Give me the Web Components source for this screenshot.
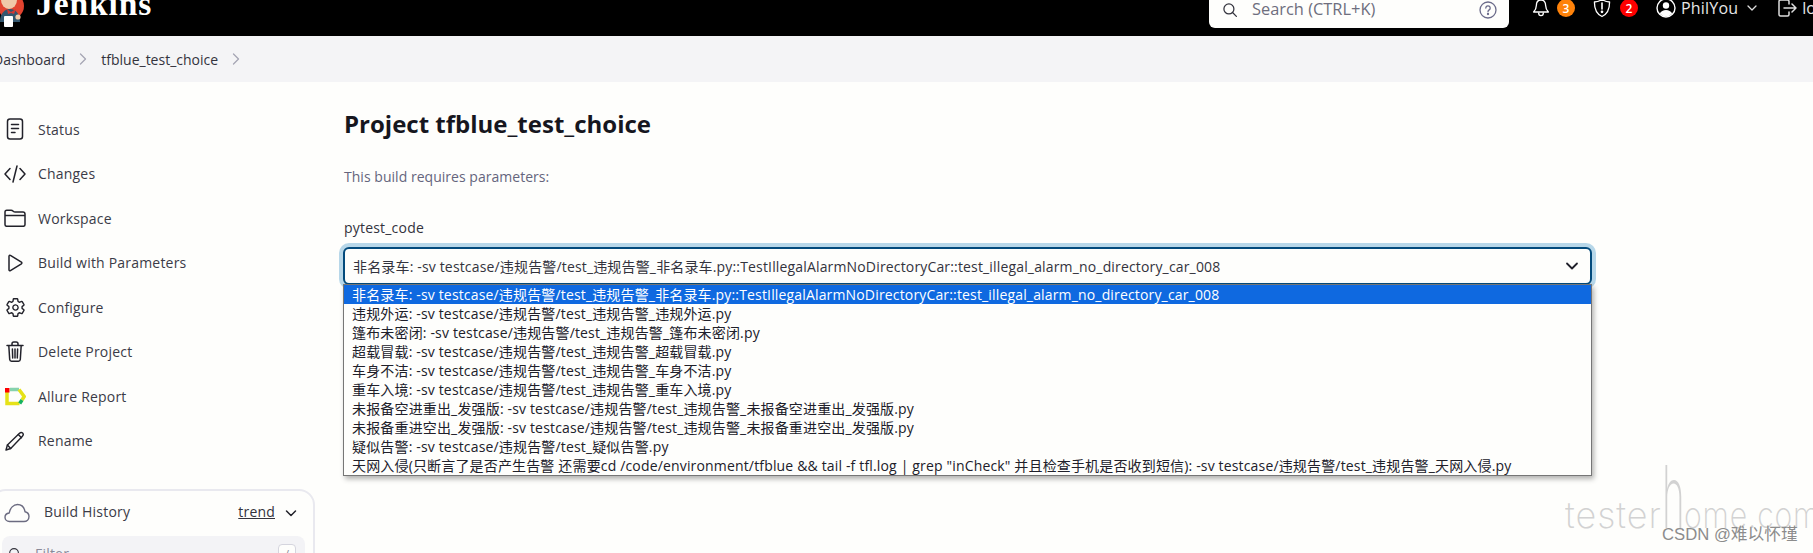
<!DOCTYPE html>
<html lang="zh">
<head>
<meta charset="UTF-8">
<title>tfblue_test_choice - Jenkins</title>
<style>
  html, body { margin: 0; height: 553px; overflow: hidden; background: #fefefc; }
  body { font-family: "Open Sans", "Noto Sans CJK SC", sans-serif; color: #33333d; }
  .page { display: flex; align-items: flex-start; height: 471px; overflow: hidden; }
</style>
</head>
<body>

<template id="top-bar-template">
  <style>
    :host { display: flex; height: 36px; background: #000; color: #fff; overflow: hidden; align-items: flex-start; position: relative; }
    .brand { display: flex; align-items: flex-start; width: 1209px; flex: none; }
    .logo { flex: none; margin: -8px 0 0 -3px; }
    .name { font: bold 33.5px/36px "Liberation Serif", serif; margin: -14px 0 0 5px; letter-spacing: .9px; }
    .search { flex: none; width: 300px; height: 28px; background: #fefefc; border-radius: 0 0 6px 6px; display: flex; align-items: center; color: #6e6e7e; font-size: 16.4px; box-sizing: border-box; padding: 0 12px 12px 13px; }
    .search .txt { margin-left: 14px; flex: 1; white-space: nowrap; }
    .search svg { flex: none; position: relative; top: 2px; }
    .actions { display: flex; align-items: center; height: 16px; flex: none; font-size: 16px; white-space: nowrap; }
    .badge { width: 18px; height: 18px; border-radius: 50%; color: #fff; font-size: 12px; font-weight: 600; display: flex; align-items: center; justify-content: center; }
  </style>
  <div class="brand">
    <svg class="logo" width="34" height="36" viewBox="0 0 34 36">
      <circle cx="14" cy="14" r="13" fill="#e2432f"/>
      <ellipse cx="12" cy="8" rx="8" ry="9" fill="#f0c9a8"/>
      <path d="M3 30c0-9 5-13 10-13s10 4 10 13z" fill="#33566e"/>
      <path d="M10 17l4 3 5-3-2 5-3-1-3 1z" fill="#d33833"/>
      <rect x="7" y="24" width="9" height="11" rx="1" fill="#fff"/>
      <circle cx="21" cy="25" r="2.6" fill="#f0c9a8"/>
    </svg>
    <span class="name">Jenkins</span>
  </div>
  <div class="search">
    <svg width="16" height="16" viewBox="0 0 512 512" fill="none" stroke="#33333d" stroke-width="40"><circle cx="221" cy="221" r="160"/><path d="M338 338l122 122" stroke-linecap="round"/></svg>
    <span class="txt">Search (CTRL+K)</span>
    <svg width="18" height="18" viewBox="0 0 18 18" fill="none" stroke="#6b6b8a" stroke-width="1.3"><circle cx="9" cy="9" r="8"/><path d="M6.8 7a2.2 2.2 0 1 1 3.4 1.9C9.4 9.4 9 9.9 9 10.7" stroke-linecap="round"/><circle cx="9" cy="13" r=".5" fill="#6b6b8a"/></svg>
  </div>
  <div class="actions" style="margin-left:23px">
    <svg width="18" height="18" viewBox="0 0 18 18" fill="none" stroke="#fff" stroke-width="1.3" stroke-linejoin="round"><path d="M9 1c-3.2 0-4.6 2.4-4.6 5.2 0 3.6-1.2 5-2.8 6.800h14.800c-1.600-1.800-2.800-3.200-2.800-6.800C13.600 3.400 12.200 1 9 1z"/><path d="M6.600 13.400c0 2 1 3.200 2.400 3.200s2.400-1.200 2.400-3.200"/></svg>
    <span class="badge" style="background:#fe820a;margin-left:7px">3</span>
    <svg width="20" height="20" viewBox="0 0 20 20" fill="none" stroke="#fff" stroke-width="1.3" stroke-linejoin="round" style="margin-left:17px"><path d="M10 1.500c2.200 1.500 4.600 2.300 7.600 2.500 0 7.500-2 12-7.600 14.500C4.400 16 2.400 11.500 2.400 4c3-.2 5.400-1 7.600-2.500z"/><path d="M10 5v6" stroke-linecap="round" stroke-width="1.600"/><circle cx="10" cy="13.800" r=".7" fill="#fff"/></svg>
    <span class="badge" style="background:#fe0000;margin-left:8px">2</span>
    <svg width="20" height="20" viewBox="0 0 20 20" style="margin-left:18px"><circle cx="10" cy="10" r="9" fill="none" stroke="#fff" stroke-width="1.400"/><circle cx="10" cy="7.500" r="3.200" fill="#fff"/><path d="M3.800 15.500c1.200-2.300 3.500-3.500 6.200-3.500s5 1.200 6.200 3.500A8.500 8.500 0 0 1 10 18.500a8.500 8.500 0 0 1-6.200-3z" fill="#fff"/></svg>
    <span style="margin-left:5px;color:#e6e6e6;letter-spacing:.2px">PhilYou</span>
    <svg width="12" height="12" viewBox="0 0 12 12" fill="none" stroke="#ddd" stroke-width="1.300" stroke-linecap="round" stroke-linejoin="round" style="margin-left:8px"><path d="M2 4l4 4 4-4"/></svg>
    <svg width="20" height="18" viewBox="0 0 20 18" fill="none" stroke="#ddd" stroke-width="1.500" stroke-linecap="round" stroke-linejoin="round" style="margin-left:19px"><path d="M12 5V2.500A1.500 1.500 0 0 0 10.500 1h-7A1.500 1.500 0 0 0 2 2.500v13A1.500 1.500 0 0 0 3.500 17h7a1.500 1.500 0 0 0 1.500-1.500V13"/><path d="M7 9h12M15 5l4 4-4 4"/></svg>
    <span style="margin-left:5px;color:#e6e6e6">log out</span>
  </div>
</template>

<template id="bread-crumbs-template">
  <style>
    :host { display: flex; align-items: center; height: 46px; background: #f4f4f6; color: #33333d; font-size: 14px; white-space: nowrap; margin-left: -7px; }
    svg { margin: 0 14px; flex: none; }
  </style>
  <span>Dashboard</span>
  <svg width="8" height="12" viewBox="0 0 8 12" fill="none" stroke="#a5a5b5" stroke-width="1.300" stroke-linecap="round" stroke-linejoin="round"><path d="M1.500 1l5 5-5 5"/></svg>
  <span>tfblue_test_choice</span>
  <svg width="8" height="12" viewBox="0 0 8 12" fill="none" stroke="#a5a5b5" stroke-width="1.300" stroke-linecap="round" stroke-linejoin="round"><path d="M1.500 1l5 5-5 5"/></svg>
</template>

<template id="side-item-template">
  <style>
    :host { display: flex; align-items: center; height: 44.500px; color: #3b3b47; font-size: 14px; letter-spacing: .2px; white-space: nowrap; }
    .icon { width: 22px; height: 22px; margin: 0 12px 0 4px; display: flex; align-items: center; justify-content: center; flex: none; }
    ::slotted(svg) { display: block; }
  </style>
  <span class="icon"><slot name="icon"></slot></span>
  <slot></slot>
</template>

<template id="history-card-template">
  <style>
    :host { display: block; box-sizing: border-box; width: 325px; margin: 25.500px 0 0 -10px; height: 100px; border: 2px solid #e9e9ef; border-radius: 16px; padding: 0 8px 0 10px; color: #3b3b47; font-size: 14px; letter-spacing: .2px; }
    .head { display: flex; align-items: center; height: 41px; margin-bottom: 4px; }
    .cloud { margin: 4px 14px 0 2px; flex: none; }
    .title { flex: 1; }
    .trend { text-decoration: underline; color: #33333d; }
    .chev { margin: 4px 8px 0 10px; }
    .filter { display: flex; align-items: center; height: 36px; background: #f3f3f6; border-radius: 8px; padding: 0 9px 0 6px; color: #8a8a9a; position: relative; }
    .filter span.t { flex: 1; margin-left: 13px; }
    .key { width: 18px; height: 20px; box-sizing: border-box; border: 1px solid #d5d5de; border-radius: 4px; display: flex; align-items: center; justify-content: center; font-size: 11px; background: #fefefc; }
  </style>
  <div class="head">
    <svg class="cloud" width="26" height="20" viewBox="0 0 26 20" fill="none" stroke="#6b6b80" stroke-width="1.400" stroke-linejoin="round"><path d="M7 18.500H5.500C3 18.500 1 16.800 1 14.300 1 11.900 3 10.300 5.200 10 6 5 9.500 1.500 13.500 1.500c4 0 6.800 3 7.500 7.200 2.500.5 4 2.500 4 4.900 0 3-2.200 4.900-5 4.900z"/></svg>
    <span class="title">Build History</span>
    <span class="trend">trend</span>
    <svg class="chev" width="12" height="12" viewBox="0 0 12 12" fill="none" stroke="#22222a" stroke-width="1.500" stroke-linecap="round" stroke-linejoin="round"><path d="M1.500 4l4.500 4.500L10.500 4"/></svg>
  </div>
  <div class="filter">
    <svg width="14" height="14" viewBox="0 0 512 512" fill="none" stroke="#33333d" stroke-width="40"><circle cx="221" cy="221" r="160"/><path d="M338 338l122 122"/></svg>
    <span class="t">Filter</span>
    <span class="key">/</span>
  </div>
</template>

<template id="param-select-template">
  <style>
    :host { display: block; position: relative; font-family: "Open Sans", "Noto Sans CJK SC", sans-serif; letter-spacing: .16px; }
    .box { box-sizing: border-box; height: 38px; border: 2px solid #024a7c; border-radius: 6px; box-shadow: 0 0 0 4px #b7d7e9; background: #fefefc; display: flex; align-items: center; padding: 0 10px 0 8px; font-size: 14px; color: #33333d; white-space: nowrap; }
    .box span { flex: 1; }
    .list { position: absolute; left: 0; right: 0; top: 37px; background: #fefefc; border: 1px solid #767676; box-shadow: 2px 3px 5px rgba(0,0,0,.3); z-index: 2; }
  </style>
  <div class="box">
    <span id="value"></span>
    <svg width="16" height="16" viewBox="0 0 16 16" fill="none" stroke="#20202a" stroke-width="1.800" stroke-linecap="round" stroke-linejoin="round"><path d="M3 5.500l5 5 5-5"/></svg>
  </div>
  <div class="list"><slot></slot></div>
</template>

<template id="param-option-template">
  <style>
    :host { display: block; height: 19px; line-height: 19px; font-size: 14px; padding-left: 8px; white-space: nowrap; color: #20202a; }
    :host([selected]) { background: #0f69e0; color: #fff; }
  </style>
  <slot></slot>
</template>

<template id="water-mark-template">
  <style>
    :host { display: block; position: absolute; left: 1565px; top: 455px; width: 248px; height: 95px; overflow: hidden; pointer-events: none; }
    .hand { position: absolute; left: 0; bottom: 22px; font: 200 36px/25px "Inter", sans-serif; letter-spacing: 1px; color: #d2d2d2; white-space: nowrap; }
    .hand b { display: inline-block; font-weight: 200; font-size: 86px; line-height: 0; width: 22px; transform: scaleX(.45); transform-origin: left bottom; }
    .hand i { display: inline-block; font-style: normal; transform: scaleX(.84); transform-origin: left bottom; }
    .csdn { position: absolute; left: 97px; bottom: 6px; font: 16.7px/1 "Liberation Sans", "Noto Sans CJK SC", sans-serif; color: #8c8c8c; white-space: nowrap; }
  </style>
  <span class="hand">tester<b>h</b><i>ome.com</i></span>
  <span class="csdn">CSDN @难以怀瑾</span>
</template>

<top-bar></top-bar>
<bread-crumbs></bread-crumbs>
<div class="page">
  <side-panel>
    <side-item><svg slot="icon" width="20" height="22" viewBox="0 0 20 22" fill="none" stroke="#22222a" stroke-width="1.500" stroke-linecap="round"><rect x="2.500" y="1" width="15" height="20" rx="2.500"/><path d="M6.500 6.500h7M6.500 10.500h7M6.500 14.500h3.500"/></svg>Status</side-item>
    <side-item><svg slot="icon" width="22" height="22" viewBox="0 0 22 22" fill="none" stroke="#22222a" stroke-width="1.500" stroke-linecap="round" stroke-linejoin="round"><path d="M6 5.500L1 11l5 5.500M16 5.500l5 5.500-5 5.500M13 3L9 19"/></svg>Changes</side-item>
    <side-item><svg slot="icon" width="22" height="18" viewBox="0 0 22 18" fill="none" stroke="#22222a" stroke-width="1.500" stroke-linejoin="round"><path d="M1 4.500V3a1.800 1.800 0 0 1 1.800-1.800H7c1 0 1.500.3 2.200 1 .6.600 1.200.9 2 .9h7.800A2 2 0 0 1 21 5v10.500a1.800 1.800 0 0 1-1.800 1.800H2.800A1.800 1.800 0 0 1 1 15.500z"/><path d="M1 6.500h20"/></svg>Workspace</side-item>
    <side-item><svg slot="icon" width="16" height="18" viewBox="0 0 16 18" fill="none" stroke="#22222a" stroke-width="1.500" stroke-linejoin="round"><path d="M2 2.200v13.600c0 .8.700 1.200 1.400.8l11-6.800c.6-.4.600-1.200 0-1.600l-11-6.800C2.700.9 2 1.400 2 2.200z"/></svg>Build with Parameters</side-item>
    <side-item><svg slot="icon" width="21" height="21" viewBox="0 0 512 512" fill="none" stroke="#22222a" stroke-width="34" stroke-linecap="round" stroke-linejoin="round"><path d="M262.290 192.310a64 64 0 1057.400 57.400 64.130 64.130 0 00-57.400-57.400zM416.390 256a154.340 154.340 0 01-1.530 20.790l45.210 35.460a10.810 10.810 0 012.450 13.750l-42.770 74a10.810 10.810 0 01-13.140 4.590l-44.900-18.080a16.110 16.110 0 00-15.170 1.750A164.480 164.480 0 01325 400.800a15.940 15.940 0 00-8.820 12.140l-6.730 47.890a11.080 11.080 0 01-10.680 9.170h-85.540a11.110 11.110 0 01-10.690-8.870l-6.720-47.820a16.070 16.070 0 00-9-12.220 155.300 155.300 0 01-21.460-12.570 16 16 0 00-15.110-1.710l-44.890 18.070a10.810 10.810 0 01-13.140-4.580l-42.770-74a10.800 10.800 0 012.450-13.750l38.210-30a16.050 16.050 0 006-14.080c-.36-4.170-.58-8.330-.58-12.500s.21-8.270.58-12.350a16 16 0 00-6.070-13.940l-38.190-30A10.810 10.810 0 0149.480 186l42.770-74a10.810 10.810 0 0113.140-4.590l44.900 18.080a16.110 16.110 0 0015.170-1.750A164.480 164.480 0 01187 111.200a15.940 15.940 0 008.820-12.140l6.730-47.890A11.080 11.080 0 01213.230 42h85.540a11.110 11.110 0 0110.690 8.870l6.720 47.820a16.070 16.070 0 009 12.220 155.300 155.300 0 0121.460 12.570 16 16 0 0015.110 1.710l44.890-18.070a10.810 10.810 0 0113.140 4.580l42.770 74a10.800 10.800 0 01-2.450 13.750l-38.210 30a16.050 16.050 0 00-6.050 14.080c.33 4.140.55 8.300.55 12.470z"/></svg>Configure</side-item>
    <side-item><svg slot="icon" width="18" height="21" viewBox="0 0 18 21" fill="none" stroke="#22222a" stroke-width="1.500" stroke-linecap="round" stroke-linejoin="round"><path d="M1 4.500h16M6 4.500V2.800C6 1.800 6.700 1 7.800 1h2.400c1.100 0 1.800.8 1.800 1.800v1.700M2.800 4.500l.9 14c.1 1 .8 1.700 1.800 1.700h7c1 0 1.700-.7 1.800-1.700l.9-14M6.400 8l.3 9M9 8v9M11.600 8l-.3 9"/></svg>Delete Project</side-item>
    <side-item><svg slot="icon" width="21" height="19" viewBox="0 0 21 19" fill="none" stroke-width="3.500"><path d="M5 2.500h9" stroke="#86d2ad"/><path d="M14 2.500l5.200 7-2.200 3.500" stroke="#e6e218"/><path d="M14.500 16.500H2V5" stroke="#e6e218"/><path d="M17 13l-2.300 3.500" stroke="#16b35e"/><rect x="0" y="1" width="4.500" height="4.500" fill="#fe0000"/></svg>Allure Report</side-item>
    <side-item><svg slot="icon" width="20" height="20" viewBox="0 0 20 20" fill="none" stroke="#22222a" stroke-width="1.400" stroke-linecap="round" stroke-linejoin="round"><path d="M1 19l1.400-5L14.500 2.300c1-1 2.300-1 3.100-.2.800.8.800 2.100-.2 3.100L5.700 17.500z"/><path d="M2.400 14l3.300 3.500M13.300 3.500l3.200 3.200"/></svg>Rename</side-item>
    <history-card></history-card>
  </side-panel>
  <job-main>
    <h1 slot="title">Project tfblue_test_choice</h1>
  </job-main>
</div>
<water-mark></water-mark>

<script>
  // clone a template into an open shadow root
  function define(tag, templateId) {
    customElements.define(tag, class extends HTMLElement {
      constructor() {
        super();
        this.attachShadow({ mode: 'open' });
        this.shadowRoot.appendChild(document.getElementById(templateId).content.cloneNode(true));
      }
    });
  }

  define('top-bar', 'top-bar-template');
  define('bread-crumbs', 'bread-crumbs-template');
  define('side-item', 'side-item-template');
  define('history-card', 'history-card-template');
  define('param-option', 'param-option-template');
  define('water-mark', 'water-mark-template');

  class SidePanel extends HTMLElement {
    constructor() {
      super();
      this.attachShadow({ mode: 'open' }).innerHTML = `
        <style>:host { display: block; width: 344px; flex: none; padding-top: 25px; box-sizing: border-box; }</style>
        <slot></slot>`;
    }
  }
  customElements.define('side-panel', SidePanel);

  class ParamSelect extends HTMLElement {
    constructor() {
      super();
      this.attachShadow({ mode: 'open' });
      this.shadowRoot.appendChild(document.getElementById('param-select-template').content.cloneNode(true));
    }
    connectedCallback() {
      this.shadowRoot.getElementById('value').textContent = this.getAttribute('value') || '';
    }
  }
  customElements.define('param-select', ParamSelect);

  const OPTIONS = [
    '非名录车: -sv testcase/违规告警/test_违规告警_非名录车.py::TestIllegalAlarmNoDirectoryCar::test_illegal_alarm_no_directory_car_008',
    '违规外运: -sv testcase/违规告警/test_违规告警_违规外运.py',
    '篷布未密闭: -sv testcase/违规告警/test_违规告警_篷布未密闭.py',
    '超载冒载: -sv testcase/违规告警/test_违规告警_超载冒载.py',
    '车身不洁: -sv testcase/违规告警/test_违规告警_车身不洁.py',
    '重车入境: -sv testcase/违规告警/test_违规告警_重车入境.py',
    '未报备空进重出_发强版: -sv testcase/违规告警/test_违规告警_未报备空进重出_发强版.py',
    '未报备重进空出_发强版: -sv testcase/违规告警/test_违规告警_未报备重进空出_发强版.py',
    '疑似告警: -sv testcase/违规告警/test_疑似告警.py',
    '天网入侵(只断言了是否产生告警 还需要cd /code/environment/tfblue && tail -f tfl.log | grep "inCheck" 并且检查手机是否收到短信): -sv testcase/违规告警/test_违规告警_天网入侵.py'
  ];

  class JobMain extends HTMLElement {
    constructor() {
      super();
      const root = this.attachShadow({ mode: 'open' });
      root.innerHTML = `
        <style>
          :host { display: block; width: 1248px; flex: none; padding-top: 25px; }
          ::slotted(h1) { margin: 0; font-size: 24px; line-height: 34px; font-weight: 700; color: #16161e; }
          .hint { margin: 26px 0 0; font-size: 14px; line-height: 20px; color: #65657d; letter-spacing: .03px; }
          .label { margin: 31px 0 0; font-size: 14px; line-height: 20px; color: #33333d; letter-spacing: .2px; }
          param-select { margin-top: 9px; margin-left: -1px; }
        </style>
        <slot name="title"></slot>
        <p class="hint">This build requires parameters:</p>
        <p class="label">pytest_code</p>`;
      const select = document.createElement('param-select');
      select.setAttribute('value', OPTIONS[0]);
      OPTIONS.forEach((text, i) => {
        const opt = document.createElement('param-option');
        if (i === 0) opt.setAttribute('selected', '');
        opt.textContent = text;
        select.appendChild(opt);
      });
      root.appendChild(select);
    }
  }
  customElements.define('job-main', JobMain);
</script>
</body>
</html>
